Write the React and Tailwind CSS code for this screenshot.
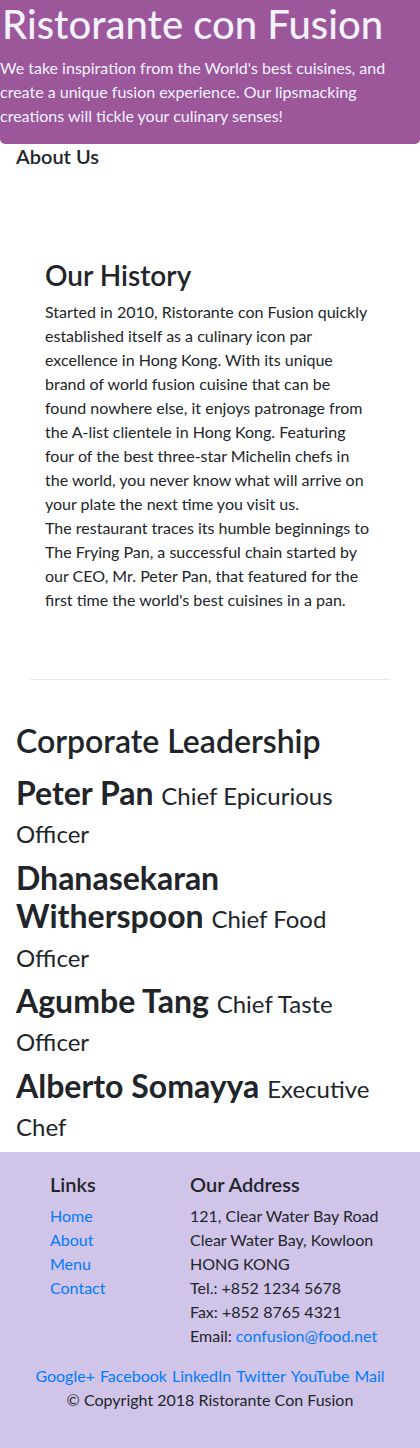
const leaders = [
  { name: 'Peter Pan', role: 'Chief Epicurious Officer' },
  { name: 'Dhanasekaran Witherspoon', role: 'Chief Food Officer' },
  { name: 'Agumbe Tang', role: 'Chief Taste Officer' },
  { name: 'Alberto Somayya', role: 'Executive Chef' },
];

const links = ['Home', 'About', 'Menu', 'Contact'];
const socials = ['Google+', 'Facebook', 'LinkedIn', 'Twitter', 'YouTube', 'Mail'];

export default function App() {
  return (
    <div className="font-['Lato',sans-serif] text-[#212529] bg-white">
      {/* Jumbotron */}
      <div className="bg-[#9b579a] text-[#f4f2ff] rounded-b-[5px] pb-4">
        <h1 className="text-[40px] leading-[48px] font-medium pl-[2px] mb-2">Ristorante con Fusion</h1>
        <p className="text-base leading-6">
          We take inspiration from the World's best cuisines, and create a unique fusion experience. Our lipsmacking creations will tickle your culinary senses!
        </p>
      </div>

      {/* Breadcrumb heading */}
      <div className="px-4">
        <h3 className="text-[20px] leading-6 font-semibold">About Us</h3>
      </div>

      {/* Our History */}
      <div className="px-[45px] mt-[91px]">
        <h2 className="text-[28px] leading-[33px] font-semibold mb-2">Our History</h2>
        <p className="text-base leading-6">
          Started in 2010, Ristorante con Fusion quickly established itself as a culinary icon par excellence in Hong Kong. With its unique brand of world fusion cuisine that can be found nowhere else, it enjoys patronage from the A-list clientele in Hong Kong. Featuring four of the best three-star Michelin chefs in the world, you never know what will arrive on your plate the next time you visit us.
          <br />
          The restaurant traces its humble beginnings to The Frying Pan, a successful chain started by our CEO, Mr. Peter Pan, that featured for the first time the world's best cuisines in a pan.
        </p>
      </div>

      <hr className="mx-[30px] mt-[67px] border-0 border-t border-[#e6e6e6]" />

      {/* Corporate Leadership */}
      <div className="px-4 mt-[42px]">
        <h2 className="text-[32px] leading-[38px] font-semibold mb-[14px]">Corporate Leadership</h2>
        {leaders.map((l) => (
          <h2 key={l.name} className="text-[32px] leading-[38.4px] font-bold mb-2">
            {l.name} <span className="text-[24px] leading-[1.2] font-normal">{l.role}</span>
          </h2>
        ))}
      </div>

      {/* Footer */}
      <footer className="bg-[#d1c4e9] pt-5 pb-9">
        <div className="grid grid-cols-[140px_1fr] pl-[50px]">
          <div>
            <h5 className="text-[20px] leading-6 font-semibold mb-2">Links</h5>
            <ul className="text-base leading-6">
              {links.map((l) => (
                <li key={l}>
                  <a href="#" className="text-[#007bff]">{l}</a>
                </li>
              ))}
            </ul>
          </div>
          <div>
            <h5 className="text-[20px] leading-6 font-semibold mb-2">Our Address</h5>
            <address className="not-italic text-base leading-6">
              121, Clear Water Bay Road<br />
              Clear Water Bay, Kowloon<br />
              HONG KONG<br />
              Tel.: +852 1234 5678<br />
              Fax: +852 8765 4321<br />
              Email: <a href="#" className="text-[#007bff]">confusion@food.net</a>
            </address>
          </div>
        </div>
        <div className="mt-4 text-center text-base leading-6">
          <div className="flex justify-center gap-[5px] text-[#007bff]">
            {socials.map((s) => (
              <a key={s} href="#">{s}</a>
            ))}
          </div>
          <p>© Copyright 2018 Ristorante Con Fusion</p>
        </div>
      </footer>
    </div>
  );
}
